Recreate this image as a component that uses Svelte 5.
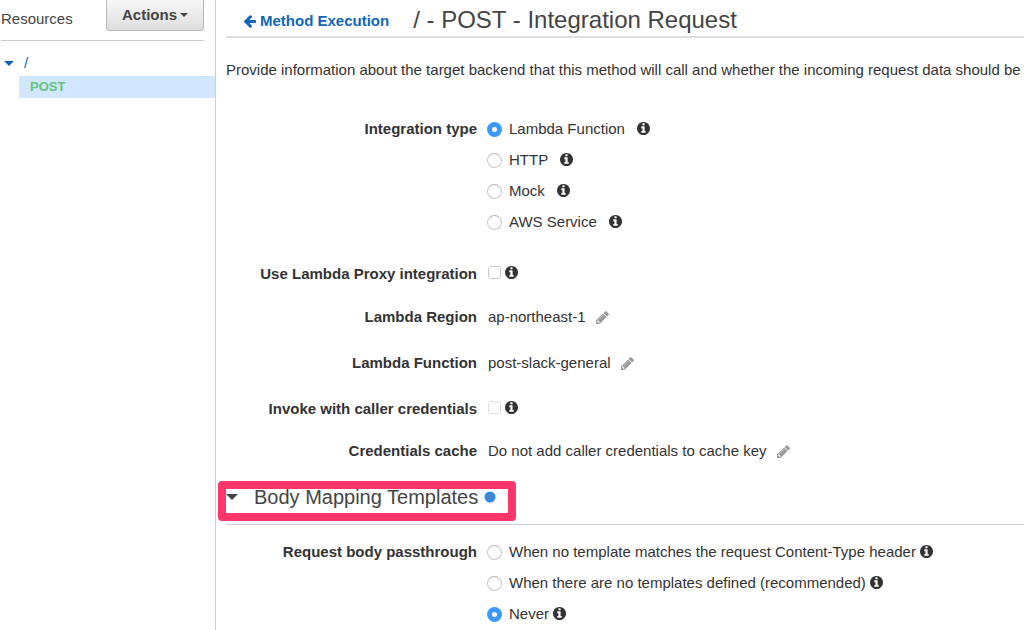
<script lang="ts">
  type Option = { value: string; label: string };

  const integrationTypes: Option[] = [
    { value: 'lambda', label: 'Lambda Function' },
    { value: 'http', label: 'HTTP' },
    { value: 'mock', label: 'Mock' },
    { value: 'aws', label: 'AWS Service' },
  ];
  const passthroughModes: Option[] = [
    { value: 'no-match', label: 'When no template matches the request Content-Type header' },
    { value: 'no-templates', label: 'When there are no templates defined (recommended)' },
    { value: 'never', label: 'Never' },
  ];

  let integration = $state('lambda');
  let passthrough = $state('never');
  let proxy = $state(false);
  let callerCredentials = $state(false);
</script>

{#snippet info()}
  <svg class="info" viewBox="0 128 1536 1536" aria-hidden="true">
    <path d="M1024 1376v-160q0-14-9-23t-23-9h-96v-512q0-14-9-23t-23-9h-320q-14 0-23 9t-9 23v160q0 14 9 23t23 9h96v320h-96q-14 0-23 9t-9 23v160q0 14 9 23t23 9h448q14 0 23-9t9-23zm-128-896v-160q0-14-9-23t-23-9h-192q-14 0-23 9t-9 23v160q0 14 9 23t23 9h192q14 0 23-9t9-23zm640 416q0 209-103 385.5t-279.5 279.5-385.5 103-385.5-103-279.5-279.5-103-385.5 103-385.5 279.5-279.5 385.5-103 385.5 103 279.5 279.5 103 385.5z" />
  </svg>
{/snippet}

{#snippet edit(name: string)}
  <button class="edit" type="button" aria-label={name}>
    <svg viewBox="128 128 1536 1536" aria-hidden="true">
      <path d="M491 1536l91-91-235-235-91 91v107h128v128h107zm523-928q0-22-22-22-10 0-17 7l-542 542q-7 7-7 17 0 22 22 22 10 0 17-7l542-542q7-7 7-17zm-54-192l416 416-832 832h-416v-416zm683 96q0 53-37 90l-166 166-416-416 166-165q36-38 90-38 53 0 91 38l235 234q37 39 37 91z" />
    </svg>
  </button>
{/snippet}

<div class="app">
  <aside>
    <div class="side-head">
      <span>Resources</span>
      <button class="actions" type="button">
        Actions
        <svg viewBox="0 0 8 4" aria-hidden="true"><path d="M0 0h8L4 4z" /></svg>
      </button>
    </div>
    <nav>
      <a class="root" href="#root">
        <svg viewBox="0 0 10 5" aria-hidden="true"><path d="M0 0h10L5 5z" /></svg>
        <span>/</span>
      </a>
      <a class="method" href="#post">POST</a>
    </nav>
  </aside>

  <main>
    <header>
      <a class="back" href="#method">
        <svg viewBox="64 192 1600 1536" aria-hidden="true">
          <path d="M1664 896v128q0 53-32.5 90.5t-84.5 37.5h-704l293 294q38 36 38 90t-38 90l-75 76q-37 37-90 37-52 0-91-37l-651-652q-37-37-37-90 0-52 37-91l651-650q38-38 91-38 52 0 90 38l75 74q38 38 38 91t-38 91l-293 293h704q52 0 84.5 37.5t32.5 90.5z" />
        </svg>
        Method Execution
      </a>
      <h1>/ - POST - Integration Request</h1>
    </header>

    <p class="intro">
      Provide information about the target backend that this method will call and whether the incoming request data should be
    </p>

    <div class="field" role="radiogroup" aria-labelledby="type-label">
      <span class="name" id="type-label">Integration type</span>
      <div class="options spaced">
        {#each integrationTypes as option}
          <div class="option">
            <label><input type="radio" name="integration" value={option.value} bind:group={integration} />{option.label}</label>
            {@render info()}
          </div>
        {/each}
      </div>
    </div>

    <div class="field row first">
      <label class="name" for="proxy">Use Lambda Proxy integration</label>
      <div class="check"><input id="proxy" type="checkbox" bind:checked={proxy} />{@render info()}</div>
    </div>
    <div class="field row">
      <span class="name">Lambda Region</span>
      <div class="value">ap-northeast-1 {@render edit('Edit Lambda Region')}</div>
    </div>
    <div class="field row">
      <span class="name">Lambda Function</span>
      <div class="value">post-slack-general {@render edit('Edit Lambda Function')}</div>
    </div>
    <div class="field row">
      <label class="name" for="caller">Invoke with caller credentials</label>
      <div class="check"><input id="caller" class="faint" type="checkbox" bind:checked={callerCredentials} />{@render info()}</div>
    </div>
    <div class="field row last">
      <span class="name">Credentials cache</span>
      <div class="value">Do not add caller credentials to cache key {@render edit('Edit Credentials cache')}</div>
    </div>

    <section>
      <h2>
        <svg class="caret" viewBox="0 0 12 6" aria-hidden="true"><path d="M0 0h12L6 6z" /></svg>
        <span class="title">Body Mapping Templates</span>
        <svg class="dot" viewBox="0 0 12 12" aria-hidden="true">
          <circle cx="6" cy="6" r="5.5" fill="#2f8ae6" />
          <circle cx="6" cy="6" r="2" fill="#4089d4" stroke="#5a7fa8" stroke-width="1" />
        </svg>
        <span class="highlight"></span>
      </h2>
      <div class="field" role="radiogroup" aria-labelledby="pass-label">
        <span class="name" id="pass-label">Request body passthrough</span>
        <div class="options">
          {#each passthroughModes as option}
            <div class="option">
              <label><input type="radio" name="passthrough" value={option.value} bind:group={passthrough} />{option.label}</label>
              {@render info()}
            </div>
          {/each}
        </div>
      </div>
    </section>
  </main>
</div>

<style>
  :global(body) {
    margin: 0;
    background: #fff;
    overflow: hidden;
  }
  .app {
    display: flex;
    min-height: 100vh;
    font: 15px/20px 'Liberation Sans', Arial, sans-serif;
    color: #333;
  }
  svg {
    display: block;
    flex: none;
    fill: currentColor;
  }
  a {
    text-decoration: none;
    color: #1166bb;
  }
  button {
    font: inherit;
    color: inherit;
  }

  aside {
    flex: none;
    width: 215px;
    border-right: 1px solid #ccc;
  }
  .side-head {
    display: flex;
    align-items: flex-start;
    justify-content: space-between;
    height: 40px;
    margin: 0 11px 0 1px;
    border-bottom: 1px solid #ccc;
    color: #444;
  }
  .side-head span {
    padding-top: 9px;
  }
  .actions {
    display: flex;
    align-items: center;
    justify-content: center;
    gap: 3px;
    width: 98px;
    height: 31px;
    padding: 0;
    border: 1px solid #b8b8b8;
    border-top: 0;
    border-radius: 0 0 4px 4px;
    background: linear-gradient(#f6f6f6, #dedede);
    font-weight: bold;
    color: #444;
  }
  .actions svg {
    width: 8px;
    height: 4px;
  }
  nav {
    padding-top: 10px;
  }
  .root {
    display: flex;
    align-items: center;
    gap: 10px;
    height: 24px;
    padding: 0 0 1px 4px;
  }
  .root svg {
    width: 10px;
    height: 5px;
  }
  .method {
    display: block;
    margin-left: 19px;
    padding-left: 11px;
    background: #d0e7ff;
    font-size: 13px;
    font-weight: bold;
    line-height: 22px;
    color: #66c27c;
  }

  main {
    flex: 1;
    min-width: 0;
    padding-left: 10px;
    overflow: hidden;
  }
  header {
    display: flex;
    align-items: center;
    gap: 24px;
    height: 36px;
    padding-left: 17px;
    border-bottom: 2px solid #ddd;
  }
  .back {
    display: flex;
    align-items: center;
    gap: 4px;
    padding-top: 6px;
    font-weight: bold;
  }
  .back svg {
    width: 13px;
    height: 13px;
  }
  h1 {
    margin: 0;
    padding-top: 3px;
    font-size: 24px;
    font-weight: normal;
    line-height: 28px;
    color: #444;
  }
  .intro {
    margin: 22px 0 33px;
    white-space: nowrap;
  }

  .field {
    display: grid;
    grid-template-columns: 251px 1fr;
    column-gap: 10px;
    align-items: center;
  }
  .field[role='radiogroup'] {
    align-items: start;
  }
  .name {
    text-align: right;
    font-weight: bold;
  }
  [role='radiogroup'] .name {
    line-height: 31px;
  }
  .option,
  .option label,
  .value,
  .check {
    display: flex;
    align-items: center;
  }
  .option {
    height: 31px;
    gap: 4px;
    white-space: nowrap;
  }
  .spaced .option {
    gap: 12px;
  }
  .option label {
    gap: 7px;
  }
  .row {
    height: 46px;
  }
  .first {
    height: 41px;
    padding-top: 16px;
  }
  .last {
    height: 38px;
  }
  .value {
    gap: 10px;
    padding-left: 1px;
  }
  .check {
    gap: 4px;
    padding: 0 0 3px 1px;
  }
  .info {
    width: 13px;
    height: 13px;
  }
  .edit {
    padding: 0;
    border: 0;
    background: none;
    color: #999;
  }
  .edit svg {
    width: 13px;
    height: 13px;
  }

  input {
    appearance: none;
    box-sizing: border-box;
    flex: none;
    margin: 0;
    border: 1px solid #c8c8c8;
    background: #fff;
  }
  input[type='radio'] {
    width: 15px;
    height: 15px;
    margin-top: 2px;
    border-color: #b5b5b5 #c8c8c8 #c8c8c8;
    border-radius: 50%;
  }
  input[type='radio']:checked {
    border: 0;
    background: radial-gradient(circle, #fff 2px, #3b99fc 3px);
  }
  input[type='checkbox'] {
    width: 13px;
    height: 13px;
    border-radius: 3px;
  }
  input[type='checkbox']:checked {
    background: #3b99fc;
  }
  input.faint {
    border-color: #e0e0e0;
  }

  h2 {
    position: relative;
    display: flex;
    align-items: center;
    height: 54px;
    margin: 0 0 11px;
    border-bottom: 1px solid #ccc;
    font-size: 20px;
    font-weight: normal;
    line-height: 24px;
    color: #444;
  }
  .caret {
    width: 12px;
    height: 6px;
  }
  .title {
    margin: 0 6px 0 16px;
  }
  .dot {
    width: 12px;
    height: 12px;
  }
  .highlight {
    position: absolute;
    top: 11px;
    left: -8px;
    box-sizing: border-box;
    width: 298px;
    height: 40px;
    border: 8px solid #ff356b;
    border-radius: 4px;
    pointer-events: none;
  }
</style>
